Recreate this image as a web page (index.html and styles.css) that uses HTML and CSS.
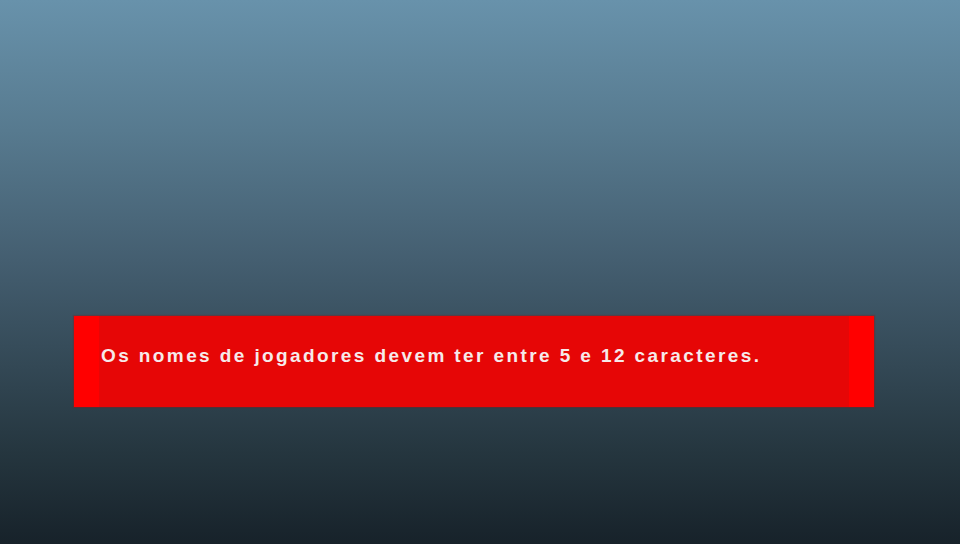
FILE: index.html
```html
<!DOCTYPE html>
<html>
<head>
<meta charset="utf-8">
<link rel="stylesheet" href="styles.css">
</head>
<body>
<div class="screen">
  <div class="banner">
    <div class="stripe"></div>
    <div class="message">Os nomes de jogadores devem ter entre 5 e 12 caracteres.</div>
    <div class="stripe"></div>
  </div>
</div>
</body>
</html>
```
FILE: styles.css
```css
html, body {
  margin: 0;
  padding: 0;
}
.screen {
  width: 960px;
  height: 544px;
  background: linear-gradient(to bottom, #6892ab 0%, #577a8f 24%, #445e70 48%, #25363f 83%, #17222a 100%);
  display: flex;
  flex-direction: column;
  padding-top: 316px;
  box-sizing: border-box;
}
.banner {
  margin-left: 74px;
  width: 800px;
  height: 91px;
  display: flex;
  background: #e60606;
  box-shadow: 0 0 1px 1px rgba(150, 20, 20, 0.35);
}
.stripe {
  width: 25px;
  background: #ff0000;
}
.message {
  flex: 1;
  padding: 29px 0 0 2px;
  font-family: "Liberation Sans", Arial, sans-serif;
  font-weight: bold;
  font-size: 19px;
  letter-spacing: 2.4px;
  color: #f6eaea;
}
```
